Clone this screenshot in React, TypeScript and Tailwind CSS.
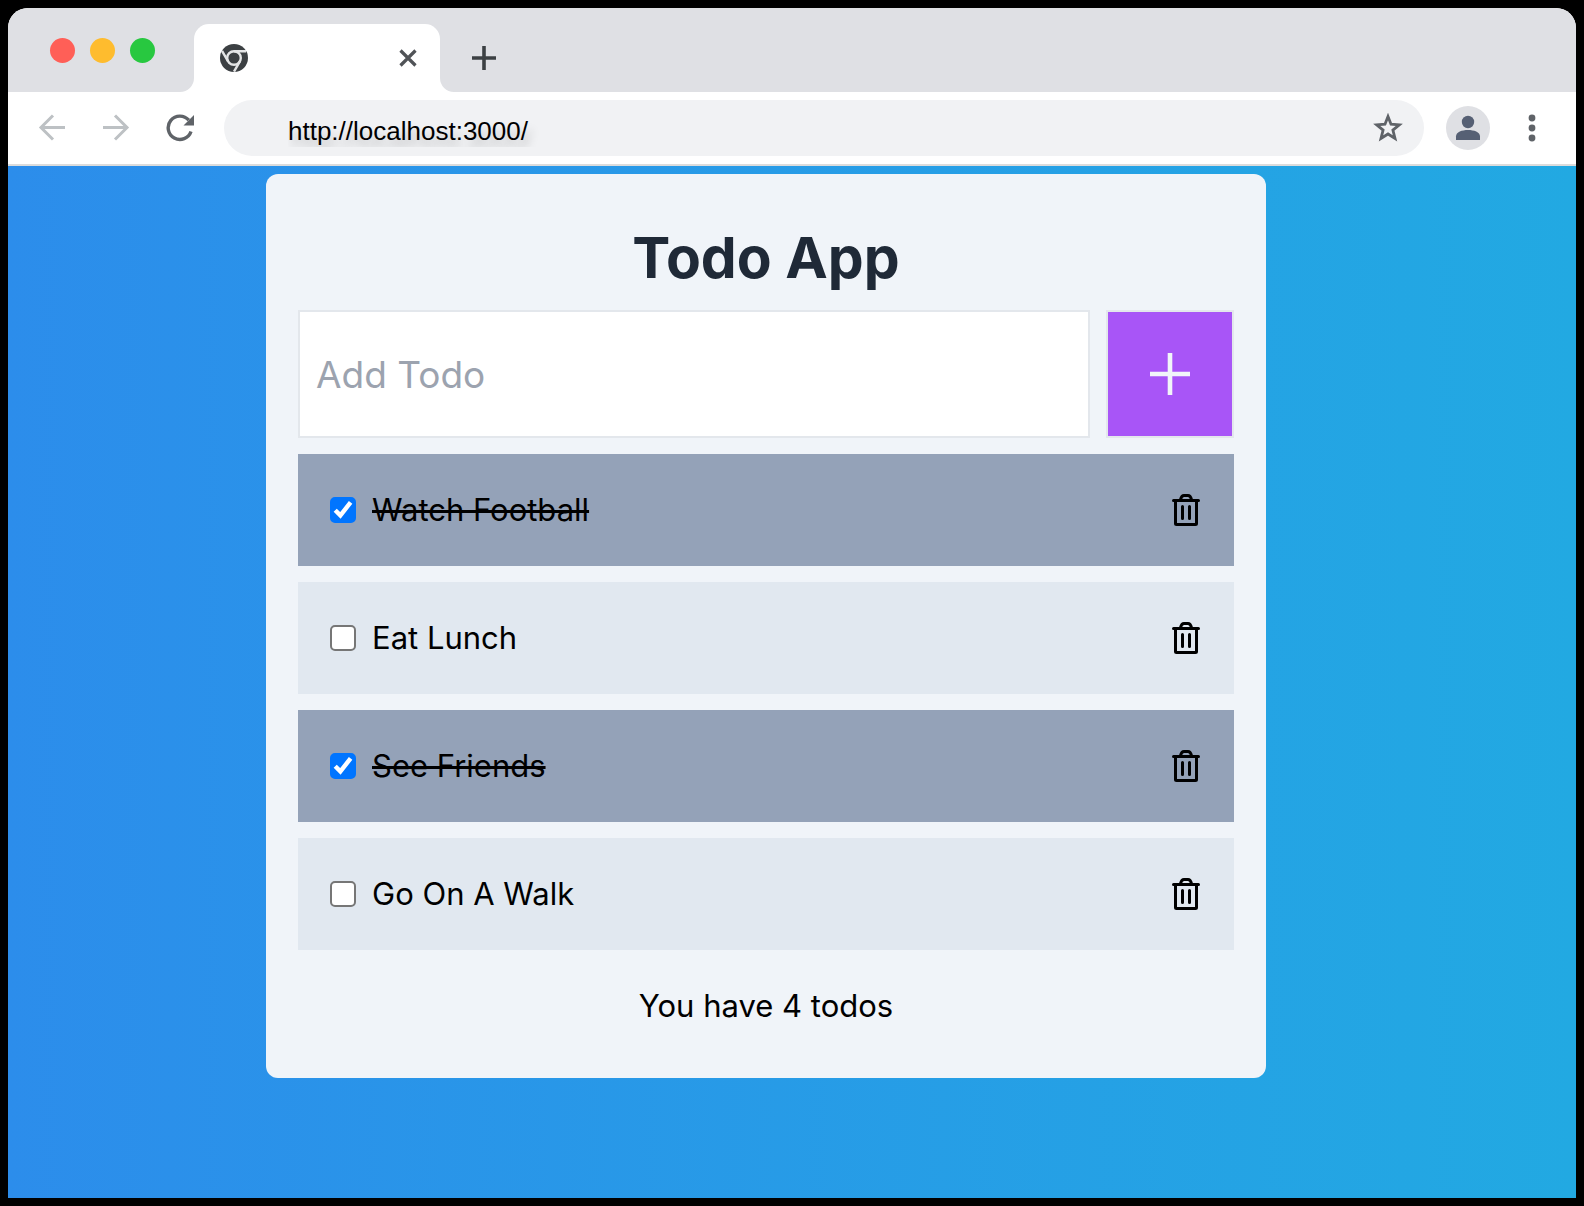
import { useState } from "react";

type Todo = { id: number; text: string; done: boolean };

const initialTodos: Todo[] = [
  { id: 1, text: "Watch Football", done: true },
  { id: 2, text: "Eat Lunch", done: false },
  { id: 3, text: "See Friends", done: true },
  { id: 4, text: "Go On A Walk", done: false },
];

function ChromeIcon() {
  return (
    <svg viewBox="0 0 28 28" className="size-7" aria-hidden="true">
      <circle cx="14" cy="14" r="14" fill="#3c4043" />
      <g fill="none" stroke="#e4e5e6" strokeWidth="2.4">
        <circle cx="14" cy="14" r="6.8" />
        <path d="M14 7.2H26M8.1 17.4L2 6.8M19.9 17.4L14 27.6" />
      </g>
    </svg>
  );
}

function TrashIcon() {
  return (
    <svg
      viewBox="0 0 32 32"
      className="size-8"
      fill="none"
      stroke="#000"
      strokeWidth="3"
      strokeLinecap="round"
      strokeLinejoin="round"
      aria-hidden="true"
    >
      <path d="M3.5 6.5H28.5" />
      <path d="M5.5 6.5V29.5Q5.5 30.5 6.5 30.5H25.5Q26.5 30.5 26.5 29.5V6.5" />
      <path d="M10.5 5.5Q11.5 1.5 14 1.5H18Q20.5 1.5 21.5 5.5" />
      <path d="M12.5 12.5V24.5M19.5 12.5V24.5" />
    </svg>
  );
}

function TabFlare({ side }: { side: "left" | "right" }) {
  return (
    <svg
      viewBox="0 0 14 14"
      aria-hidden="true"
      className={side === "left" ? "absolute bottom-0 right-full size-3.5" : "absolute bottom-0 left-full size-3.5"}
    >
      <path d={side === "left" ? "M14 0A14 14 0 0 1 0 14H14Z" : "M0 0A14 14 0 0 0 14 14H0Z"} fill="#fff" />
    </svg>
  );
}

function TabStrip() {
  return (
    <div className="flex h-[84px] items-end bg-[#dfe0e4] pl-[42px]">
      <div className="flex h-[84px] gap-[15px] pt-[30px]" aria-hidden="true">
        <span className="size-[25px] rounded-full bg-[#ff5f57]" />
        <span className="size-[25px] rounded-full bg-[#febc2e]" />
        <span className="size-[25px] rounded-full bg-[#28c840]" />
      </div>
      <div className="relative ml-[39px] flex h-[68px] w-[246px] items-center justify-between rounded-t-[15px] bg-white pr-[23px] pl-[26px]">
        <TabFlare side="left" />
        <ChromeIcon />
        <button type="button" aria-label="Close tab">
          <svg viewBox="0 0 18 18" className="size-[18px]" fill="none" stroke="#505357" strokeWidth="3.2" aria-hidden="true">
            <path d="M1.5 1.5L16.5 16.5M16.5 1.5L1.5 16.5" />
          </svg>
        </button>
        <TabFlare side="right" />
      </div>
      <div className="ml-8 flex h-[68px] items-center">
        <button type="button" aria-label="New tab">
          <svg viewBox="0 0 24 24" className="size-6" fill="none" stroke="#3c4043" strokeWidth="3.6" aria-hidden="true">
            <path d="M12 0V24M0 12H24" />
          </svg>
        </button>
      </div>
    </div>
  );
}

function Toolbar() {
  return (
    <div className="flex h-[74px] items-center border-b-2 border-[#dcdcdc] bg-white pr-10 pl-[30px]">
      <div className="flex items-center gap-9">
        <button type="button" aria-label="Back">
          <svg viewBox="0 0 28 28" className="size-7" fill="none" stroke="#bdc1c4" strokeWidth="3" aria-hidden="true">
            <path d="M27 13.5H3M15 1.5L3 13.5L15 25.5" />
          </svg>
        </button>
        <button type="button" aria-label="Forward">
          <svg viewBox="0 0 28 28" className="size-7" fill="none" stroke="#bdc1c4" strokeWidth="3" aria-hidden="true">
            <path d="M1 13.5H25M13 1.5L25 13.5L13 25.5" />
          </svg>
        </button>
        <button type="button" aria-label="Reload">
          <svg viewBox="0 0 28 28" className="size-7" fill="none" stroke="#5f6368" aria-hidden="true">
            <path d="M25 17.5A11.7 11.7 0 1 1 22.8 6.2" strokeWidth="3.4" />
            <path d="M28 1V11.5H17.5Z" fill="#5f6368" stroke="none" />
          </svg>
        </button>
      </div>
      <div className="ml-[30px] flex h-14 flex-1 items-center rounded-full bg-[#f1f2f4] pr-[21px]">
        <input
          aria-label="Address"
          defaultValue="http://localhost:3000/"
          className="h-14 min-w-0 flex-1 bg-transparent pt-1.5 pl-16 font-['Liberation_Sans',Arial,sans-serif] text-[26px] leading-[50px] text-black outline-none [text-shadow:4px_8px_8px_rgba(0,0,0,0.2)]"
        />
        <button type="button" aria-label="Bookmark">
          <svg viewBox="0 0 30 30" className="size-[30px]" fill="none" stroke="#5f6368" strokeWidth="2.8" aria-hidden="true">
            <path d="M15 3.5L18 11.2L26.3 11.8L19.9 17.1L22 25.5L15 21L8 25.5L10.1 17.1L3.7 11.8L12 11.2Z" />
          </svg>
        </button>
      </div>
      <button type="button" aria-label="Profile" className="ml-[22px]">
        <svg viewBox="0 0 44 44" className="size-11" aria-hidden="true">
          <circle cx="22" cy="22" r="22" fill="#dfe0e4" />
          <circle cx="22" cy="16" r="6.2" fill="#566074" />
          <path d="M10 34V30.5C10 26 16 24 22 24S34 26 34 30.5V34Z" fill="#566074" />
        </svg>
      </button>
      <button type="button" aria-label="Menu" className="ml-[38px]">
        <svg viewBox="0 0 8 28" className="h-7 w-2" fill="#5f6368" aria-hidden="true">
          <circle cx="4" cy="4" r="3.4" />
          <circle cx="4" cy="14" r="3.4" />
          <circle cx="4" cy="24" r="3.4" />
        </svg>
      </button>
    </div>
  );
}

export default function App() {
  const [todos, setTodos] = useState(initialTodos);
  const [draft, setDraft] = useState("");

  const toggle = (id: number) =>
    setTodos(todos.map((t) => (t.id === id ? { ...t, done: !t.done } : t)));
  const remove = (id: number) => setTodos(todos.filter((t) => t.id !== id));
  const add = () => {
    if (!draft.trim()) return;
    setTodos([...todos, { id: Date.now(), text: draft, done: false }]);
    setDraft("");
  };

  return (
    <div className="flex min-h-screen flex-col bg-black p-2 font-['Inter',sans-serif]">
      <div className="flex flex-1 flex-col overflow-hidden rounded-t-[20px] bg-white">
        <TabStrip />
        <Toolbar />
        <main className="flex-1 bg-linear-to-r from-[#2c8deb] to-[#22a9e2] pt-2 pr-[52px]">
          <div className="mx-auto max-w-[1000px] rounded-xl bg-[#f0f4f9] p-8">
            <h1 className="p-4 text-center text-[57px] leading-[72px] font-bold text-[#1f2937]">Todo App</h1>
            <form
              className="flex gap-4"
              onSubmit={(e) => {
                e.preventDefault();
                add();
              }}
            >
              <input
                aria-label="Add Todo"
                placeholder="Add Todo"
                value={draft}
                onChange={(e) => setDraft(e.target.value)}
                className="h-32 min-w-0 flex-1 border-2 border-[#e3e7ec] bg-white px-4 text-[37px] text-black outline-none placeholder:text-[#9ca3af]"
              />
              <button
                type="submit"
                aria-label="Add"
                className="flex size-32 items-center justify-center border-2 border-[#e3e7ec] bg-[#a855f7]"
              >
                <svg viewBox="0 0 42 42" className="size-[42px]" fill="none" stroke="#f1f5f9" strokeWidth="4.6" aria-hidden="true">
                  <path d="M21 0V42M1 21H41" />
                </svg>
              </button>
            </form>
            <ul className="mt-4 flex flex-col gap-4">
              {todos.map((t) => (
                <li
                  key={t.id}
                  className={
                    t.done
                      ? "flex items-center justify-between bg-[#94a2b8] p-8"
                      : "flex items-center justify-between bg-[#e1e8f0] p-8"
                  }
                >
                  <div className="flex items-center gap-4">
                    <span className="grid size-[26px]">
                      <input
                        id={`todo-${t.id}`}
                        type="checkbox"
                        checked={t.done}
                        onChange={() => toggle(t.id)}
                        className="col-start-1 row-start-1 size-[26px] appearance-none rounded-[5px] border-2 border-[#767676] bg-white checked:border-[#0075ff] checked:bg-[#0075ff]"
                      />
                      {t.done && (
                        <svg
                          viewBox="0 0 26 26"
                          className="pointer-events-none relative col-start-1 row-start-1 size-[26px]"
                          fill="none"
                          stroke="#fff"
                          strokeWidth="4.4"
                          aria-hidden="true"
                        >
                          <path d="M5.2 13.2L10.4 18.4L20.6 5.4" />
                        </svg>
                      )}
                    </span>
                    <label
                      htmlFor={`todo-${t.id}`}
                      className={
                        t.done
                          ? "text-[31px] leading-[48px] text-black line-through decoration-[3px]"
                          : "text-[31px] leading-[48px] text-black"
                      }
                    >
                      {t.text}
                    </label>
                  </div>
                  <button type="button" aria-label={`Delete ${t.text}`} onClick={() => remove(t.id)}>
                    <TrashIcon />
                  </button>
                </li>
              ))}
            </ul>
            <p className="mt-4 p-4 text-center text-[31px] leading-[48px] text-black">
              You have {todos.length} todos
            </p>
          </div>
        </main>
      </div>
    </div>
  );
}
